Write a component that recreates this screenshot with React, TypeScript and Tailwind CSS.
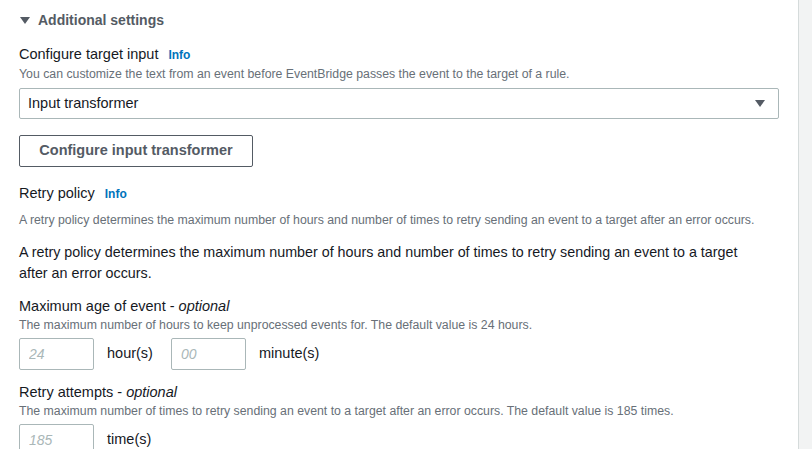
import React from "react";

const font = { fontFamily: "'Liberation Sans', Arial, sans-serif" };

function Info() {
  return <span className="ml-[10px] text-[12px] font-bold text-[#0073bb]">Info</span>;
}

function Caret({ className }: { className?: string }) {
  return (
    <svg width="10" height="7" viewBox="0 0 10 7" className={className}>
      <path d="M0 0h10L5 7z" fill="#545b64" />
    </svg>
  );
}

function NumberBox({ placeholder }: { placeholder: string }) {
  return (
    <input
      placeholder={placeholder}
      className="w-[75px] h-[32px] px-[9px] border border-[#aab7b8] rounded-[2px] text-[14px] italic placeholder:text-[#aab7b8] outline-none"
    />
  );
}

export default function App() {
  return (
    <div className="flex w-[812px] h-[449px] overflow-hidden bg-[#f2f3f3]" style={font}>
      <div className="w-[799px] shrink-0 bg-white border-r border-[#d5dbdb] pl-[19px] pr-[20px] pt-[10px] text-[#16191f]">
        <div className="flex items-center h-[20px]">
          <Caret className="ml-[1px]" />
          <span className="ml-[8px] text-[14px] font-bold text-[#545b64]">Additional settings</span>
        </div>

        <div className="mt-[15px] h-[20px] flex items-center text-[14.5px]">
          Configure target input <Info />
        </div>
        <div className="mt-[1px] leading-[16px] text-[12.3px] text-[#687078]">
          You can customize the text from an event before EventBridge passes the event to the target of a rule.
        </div>

        <div className="mt-[6px] w-[760px] h-[31px] border border-[#aab7b8] rounded-[2px] flex items-center justify-between pl-[8px] pr-[13px] text-[14.5px]">
          <span>Input transformer</span>
          <Caret />
        </div>

        <button className="mt-[16px] w-[234px] h-[32px] border border-[#545b64] rounded-[2px] text-[14.5px] font-bold text-[#545b64]">
          Configure input transformer
        </button>

        <div className="mt-[17px] h-[20px] flex items-center text-[14.5px]">
          Retry policy <Info />
        </div>
        <div className="mt-[8px] leading-[16px] text-[12.3px] text-[#687078]">
          A retry policy determines the maximum number of hours and number of times to retry sending an event to a target after an error occurs.
        </div>
        <p className="mt-[14px] w-[745px] leading-[21px] text-[14.3px]">
          A retry policy determines the maximum number of hours and number of times to retry sending an event to a target after an error occurs.
        </p>

        <div className="mt-[13px] h-[20px] flex items-center text-[14.5px]">
          Maximum age of event -&nbsp;<i>optional</i>
        </div>
        <div className="leading-[16px] text-[12.3px] text-[#687078]">
          The maximum number of hours to keep unprocessed events for. The default value is 24 hours.
        </div>
        <div className="mt-[5px] flex items-center text-[14.5px]">
          <NumberBox placeholder="24" />
          <span className="ml-[13px] w-[64px]">hour(s)</span>
          <NumberBox placeholder="00" />
          <span className="ml-[13px]">minute(s)</span>
        </div>

        <div className="mt-[13px] h-[20px] flex items-center text-[14.5px]">
          Retry attempts -&nbsp;<i>optional</i>
        </div>
        <div className="leading-[16px] text-[12.3px] text-[#687078]">
          The maximum number of times to retry sending an event to a target after an error occurs. The default value is 185 times.
        </div>
        <div className="mt-[5px] flex items-center text-[14.5px]">
          <NumberBox placeholder="185" />
          <span className="ml-[13px]">time(s)</span>
        </div>
      </div>
    </div>
  );
}
